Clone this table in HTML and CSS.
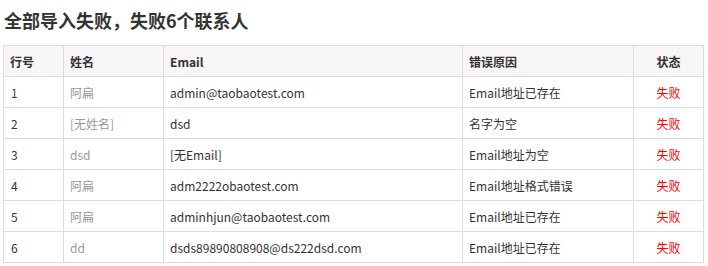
FILE: index.html
```html
<!DOCTYPE html>
<html lang="zh-CN">
<head>
    <meta charset="UTF-8">
    <title>导入结果</title>
    <link rel="stylesheet" href="styles.css">
</head>
<body>
    <div class="import-result">
        <h2 class="result-title">全部导入失败，失败6个联系人</h2>
        <table class="result-table">
            <colgroup>
                <col class="col-no">
                <col class="col-name">
                <col class="col-email">
                <col class="col-reason">
                <col class="col-status">
            </colgroup>
            <thead>
                <tr>
                    <th>行号</th>
                    <th>姓名</th>
                    <th>Email</th>
                    <th>错误原因</th>
                    <th class="status">状态</th>
                </tr>
            </thead>
            <tbody>
                <tr>
                    <td class="row-no first">1</td>
                    <td class="name">阿扁</td>
                    <td>admin@taobaotest.com</td>
                    <td>Email地址已存在</td>
                    <td class="status fail">失败</td>
                </tr>
                <tr>
                    <td class="row-no">2</td>
                    <td class="name">[无姓名]</td>
                    <td>dsd</td>
                    <td>名字为空</td>
                    <td class="status fail">失败</td>
                </tr>
                <tr>
                    <td class="row-no">3</td>
                    <td class="name">dsd</td>
                    <td>[无Email]</td>
                    <td>Email地址为空</td>
                    <td class="status fail">失败</td>
                </tr>
                <tr>
                    <td class="row-no">4</td>
                    <td class="name">阿扁</td>
                    <td>adm2222obaotest.com</td>
                    <td>Email地址格式错误</td>
                    <td class="status fail">失败</td>
                </tr>
                <tr>
                    <td class="row-no">5</td>
                    <td class="name">阿扁</td>
                    <td>adminhjun@taobaotest.com</td>
                    <td>Email地址已存在</td>
                    <td class="status fail">失败</td>
                </tr>
                <tr>
                    <td class="row-no">6</td>
                    <td class="name">dd</td>
                    <td>dsds89890808908@ds222dsd.com</td>
                    <td>Email地址已存在</td>
                    <td class="status fail">失败</td>
                </tr>
            </tbody>
        </table>
    </div>
</body>
</html>
```

FILE: styles.css
```css
body {
    margin: 0;
    font-family: "Noto Sans CJK SC", "Noto Sans", sans-serif;
    font-size: 12px;
    color: #333;
    background: #fff;
}

.import-result {
    padding: 0 3px;
}

.result-title {
    margin: 0;
    padding: 9px 0 0 1px;
    height: 36px;
    box-sizing: border-box;
    font-size: 18px;
    line-height: 22px;
    font-weight: bold;
    color: #333;
}

.result-table {
    border-collapse: collapse;
    table-layout: fixed;
    width: 700px;
    margin-top: 9px;
}

.col-no { width: 60px; }
.col-name { width: 100px; }
.col-email { width: 299px; }
.col-reason { width: 171px; }
.col-status { width: 70px; }

.result-table th,
.result-table td {
    border: 1px solid #ddd;
    height: 31px;
    padding: 1px 6px 0;
    box-sizing: border-box;
    text-align: left;
    vertical-align: middle;
    white-space: nowrap;
    line-height: 16px;
}

.result-table th {
    background: #f7f5f6;
    font-weight: bold;
}

.result-table .row-no {
    padding-left: 7px;
}

.result-table .row-no.first {
    color: #7a2048;
}

.result-table .name {
    color: #999;
}

.result-table .status {
    text-align: center;
}

.result-table .fail {
    color: #f00;
}
```
